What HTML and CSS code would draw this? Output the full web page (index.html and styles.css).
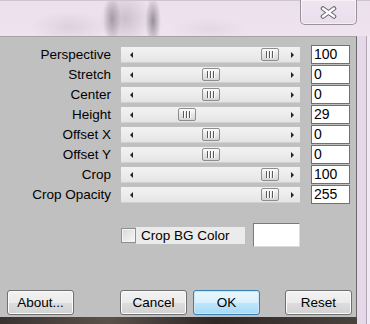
FILE: index.html
```html
<!DOCTYPE html>
<html>
<head>
<meta charset="utf-8">
<link rel="stylesheet" href="styles.css">
</head>
<body>
<div class="window">
  <div class="titlebar">
    <div class="close">
      <svg width="17" height="13" viewBox="0 0 17 13">
        <path d="M3 2.5 L14 10.5 M14 2.5 L3 10.5" stroke="#6e6a72" stroke-width="4.6" stroke-linecap="round" fill="none"/>
        <path d="M3 2.5 L14 10.5 M14 2.5 L3 10.5" stroke="#ffffff" stroke-width="2.4" stroke-linecap="round" fill="none"/>
      </svg>
    </div>
  </div>
  <div class="main">
    <div class="left">
      <div class="content">
        <div class="rows">
          <div class="lbl">Perspective</div>
          <div class="track"><span class="arr-l"></span><span class="thumb" style="left:140px"><i></i><i></i><i></i></span><span class="arr-r"></span></div>
          <div class="num">100</div>

          <div class="lbl">Stretch</div>
          <div class="track"><span class="arr-l"></span><span class="thumb" style="left:81px"><i></i><i></i><i></i></span><span class="arr-r"></span></div>
          <div class="num">0</div>

          <div class="lbl">Center</div>
          <div class="track"><span class="arr-l"></span><span class="thumb" style="left:81px"><i></i><i></i><i></i></span><span class="arr-r"></span></div>
          <div class="num">0</div>

          <div class="lbl">Height</div>
          <div class="track"><span class="arr-l"></span><span class="thumb" style="left:57px"><i></i><i></i><i></i></span><span class="arr-r"></span></div>
          <div class="num">29</div>

          <div class="lbl">Offset X</div>
          <div class="track"><span class="arr-l"></span><span class="thumb" style="left:81px"><i></i><i></i><i></i></span><span class="arr-r"></span></div>
          <div class="num">0</div>

          <div class="lbl">Offset Y</div>
          <div class="track"><span class="arr-l"></span><span class="thumb" style="left:81px"><i></i><i></i><i></i></span><span class="arr-r"></span></div>
          <div class="num">0</div>

          <div class="lbl">Crop</div>
          <div class="track"><span class="arr-l"></span><span class="thumb" style="left:140px"><i></i><i></i><i></i></span><span class="arr-r"></span></div>
          <div class="num">100</div>

          <div class="lbl">Crop Opacity</div>
          <div class="track"><span class="arr-l"></span><span class="thumb" style="left:140px"><i></i><i></i><i></i></span><span class="arr-r"></span></div>
          <div class="num">255</div>
        </div>

        <div class="check-row">
          <span class="checkbox"></span>
          <span class="check-label">Crop BG Color</span>
          <span class="color-box"></span>
        </div>

        <div class="buttons">
          <div class="btn btn-about">About...</div>
          <div class="btn btn-cancel">Cancel</div>
          <div class="btn btn-ok">OK</div>
          <div class="btn btn-reset">Reset</div>
        </div>
      </div>
      <div class="bottom-band"></div>
    </div>
    <div class="frame-r"></div>
  </div>
</div>
</body>
</html>
```

FILE: styles.css
```css
* { box-sizing: border-box; }

html, body {
  margin: 0;
  padding: 0;
}

body {
  width: 370px;
  height: 324px;
  overflow: hidden;
  font-family: "Liberation Sans", Arial, sans-serif;
  font-size: 13.5px;
  color: #000;
  background: #d8ccd8;
}

.window {
  width: 370px;
  height: 324px;
  display: flex;
  flex-direction: column;
}

.titlebar {
  height: 36px;
  display: flex;
  justify-content: flex-end;
  align-items: flex-start;
  padding-right: 13px;
  border-top: 1px solid #cfc4d0;
  background:
    radial-gradient(ellipse 8px 24px at 153px 20px, rgba(95, 85, 98, 0.6), rgba(95, 85, 98, 0) 100%),
    radial-gradient(ellipse 9px 24px at 112px 18px, rgba(120, 108, 122, 0.55), rgba(120, 108, 122, 0) 100%),
    radial-gradient(ellipse 26px 26px at 125px 18px, rgba(170, 158, 172, 0.5), rgba(170, 158, 172, 0) 100%),
    radial-gradient(ellipse 40px 16px at 70px 26px, rgba(200, 188, 202, 0.45), rgba(200, 188, 202, 0) 100%),
    radial-gradient(ellipse 40px 12px at 210px 28px, rgba(210, 200, 212, 0.4), rgba(210, 200, 212, 0) 100%),
    linear-gradient(#ece0ed, #efe3ef);
}

.close {
  width: 57px;
  height: 25px;
  margin-top: -1px;
  border: 1px solid #9a8f9d;
  border-top: none;
  border-radius: 0 0 5px 5px;
  background: linear-gradient(#efe5f0, #e9ddeb);
  box-shadow: inset 0 0 0 1px rgba(255, 255, 255, 0.5);
  display: flex;
  align-items: center;
  justify-content: center;
  padding-top: 1px;
}

.main {
  flex: 1;
  display: flex;
}

.left {
  width: 357px;
  display: flex;
  flex-direction: column;
}

.content {
  flex: 1;
  background: #c0c0c0;
  border-top: 1px solid #a4a4a4;
  border-right: 1px solid #6a6a6a;
  display: flex;
  flex-direction: column;
  padding-top: 8px;
  padding-bottom: 2px;
}

.bottom-band {
  height: 7px;
  background: linear-gradient(to right, #3a3230, #5b514a 30%, #2e2826 60%, #4a423c);
}

.frame-r {
  width: 13px;
  background: linear-gradient(to right, #e5d8e9 0 9px, #b1a5b4 9px 10px, #f1e9f3 10px);
}

.rows {
  display: grid;
  grid-template-columns: 111px 179px 40px;
  column-gap: 10px;
  grid-auto-rows: 20px;
}

.lbl {
  text-align: right;
  line-height: 20px;
  white-space: nowrap;
}

.track {
  position: relative;
  height: 16px;
  align-self: center;
  background: linear-gradient(#f2f2f2, #ebebeb 60%, #e4e4e4);
  border-bottom: 1px solid #d0d0d0;
}

.arr-l {
  position: absolute;
  left: 9px;
  top: 5px;
  width: 0;
  height: 0;
  border-top: 3px solid transparent;
  border-bottom: 3px solid transparent;
  border-right: 3px solid #222;
}

.arr-r {
  position: absolute;
  left: 170px;
  top: 5px;
  width: 0;
  height: 0;
  border-top: 3px solid transparent;
  border-bottom: 3px solid transparent;
  border-left: 3px solid #222;
}

.thumb {
  position: absolute;
  top: 1px;
  width: 18px;
  height: 13px;
  border: 1px solid #8d8d8d;
  border-radius: 2px;
  background: linear-gradient(#fbfbfb, #e6e6e6 50%, #d6d6d6);
  display: flex;
  justify-content: center;
  align-items: center;
  gap: 1px;
  padding-right: 1px;
}

.thumb i {
  display: block;
  width: 1px;
  height: 7px;
  background: #5a5a5a;
  box-shadow: 1px 0 0 #ffffff;
  margin-right: 1px;
}

.num {
  margin-left: 1px;
  width: 39px;
  height: 19px;
  align-self: start;
  background: #fff;
  border: 1px solid #707070;
  line-height: 17px;
  padding-left: 2px;
  font-size: 14px;
}

.check-row {
  margin-top: 18px;
  height: 24px;
  display: flex;
  align-items: center;
  padding-left: 121px;
}

.checkbox {
  width: 15px;
  height: 15px;
  border: 1px solid #8e8f8f;
  background: linear-gradient(135deg, #d8d8d8, #f8f8f8);
  box-shadow: inset 0 0 0 1px #f4f4f4;
}

.check-label {
  width: 109px;
  height: 17px;
  line-height: 17px;
  background: #ebebeb;
  padding-left: 5px;
  white-space: nowrap;
}

.color-box {
  margin-left: 8px;
  width: 47px;
  height: 24px;
  background: #fff;
  border-top: 1px solid #7a7a7a;
  border-left: 1px solid #7a7a7a;
  border-right: 1px solid #dcdcdc;
  border-bottom: 1px solid #dcdcdc;
}

.buttons {
  margin-top: auto;
  display: flex;
  height: 25px;
}

.btn {
  width: 67px;
  height: 25px;
  border: 1px solid #707070;
  border-radius: 3px;
  background: linear-gradient(#f2f2f2 0%, #ebebeb 50%, #dddddd 51%, #d2d2d2 100%);
  box-shadow: inset 0 0 0 1px #fbfbfb;
  display: flex;
  align-items: center;
  justify-content: center;
  font-size: 13.5px;
}

.btn-about { margin-left: 7px; }
.btn-cancel { margin-left: 46px; }
.btn-ok {
  margin-left: 6px;
  border-color: #3c7fb1;
  background: linear-gradient(#eaf6fd 0%, #d9f0fc 50%, #bee6fd 51%, #a7d9f5 100%);
  box-shadow: inset 0 0 0 1px #c8e8f8;
}
.btn-reset { margin-left: 25px; }
```
